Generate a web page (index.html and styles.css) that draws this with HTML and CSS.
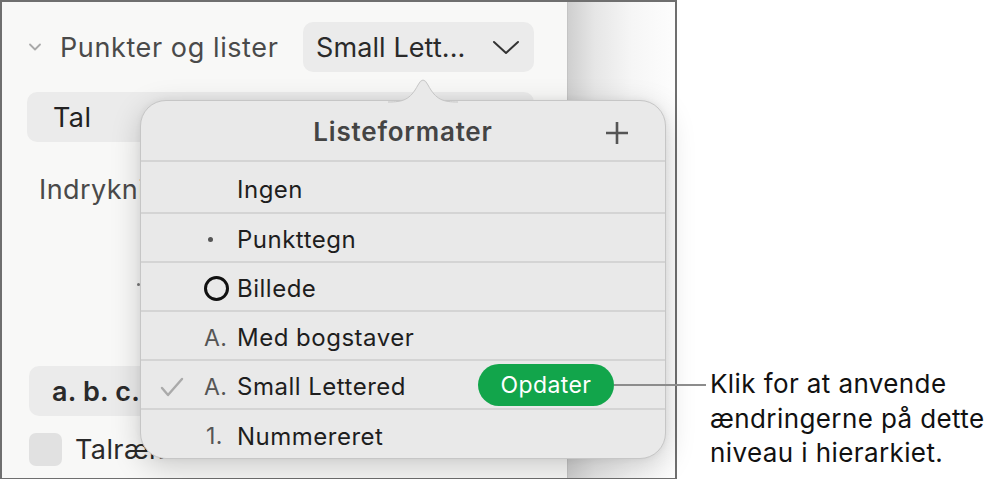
FILE: index.html
```html
<!DOCTYPE html>
<html lang="da">
<head>
  <meta charset="UTF-8" />
  <title>Listeformater</title>
  <link rel="stylesheet" href="styles.css">
</head>
<body>
  <div class="stage">
    <div class="window">
      <aside class="inspector">
        <div class="section-head">
          <svg class="disclosure" width="14" height="10" viewBox="0 0 14 10"><path d="M2 2.5 L7 7.5 L12 2.5" /></svg>
          <span class="section-title">Punkter og lister</span>
          <div class="popup">
            <span>Small Lett...</span>
            <svg class="popup-chevron" width="28" height="16" viewBox="0 0 28 16"><path d="M2 3 L14 14 L26 3" /></svg>
          </div>
        </div>
        <div class="select-wide">Tal</div>
        <div class="field-label">Indrykning</div>
        <div class="gap-area"><span class="tick"></span></div>
        <div class="select-short">a. b. c.</div>
        <div class="check-row">
          <span class="checkbox"></span>
          <span>Talrække:</span>
        </div>
      </aside>
      <div class="canvas"></div>

      <!-- Listeformater popover -->
      <div class="popover">
        <svg class="popover-arrow" width="70" height="26" viewBox="0 0 70 26">
          <path class="arrow-fill" d="M0 26 C15 26 22 24 30 9 Q35 -1 40 9 C48 24 55 26 70 26 Z" />
          <path class="arrow-edge" d="M0 26 C15 26 22 24 30 9 Q35 -1 40 9 C48 24 55 26 70 26" />
        </svg>
        <div class="popover-head">
          <span class="popover-title">Listeformater</span>
          <svg class="add-icon" width="26" height="26" viewBox="0 0 26 26"><path d="M13 2 V24 M2 13 H24" /></svg>
        </div>
        <div class="style-row first">
          <span class="check"></span><span class="marker"></span>
          <span class="style-name">Ingen</span>
        </div>
        <div class="style-row">
          <span class="check"></span><span class="marker"><span class="bullet"></span></span>
          <span class="style-name">Punkttegn</span>
        </div>
        <div class="style-row">
          <span class="check"></span><span class="marker"><span class="ring"></span></span>
          <span class="style-name">Billede</span>
        </div>
        <div class="style-row">
          <span class="check"></span><span class="marker">A.</span>
          <span class="style-name">Med bogstaver</span>
        </div>
        <div class="style-row">
          <span class="check">
            <svg width="24" height="20" viewBox="0 0 24 20"><path d="M2 11 L8 18 L22 2" /></svg>
          </span>
          <span class="marker">A.</span>
          <span class="style-name">Small Lettered</span>
          <span class="update-btn">Opdater</span>
        </div>
        <div class="style-row last">
          <span class="check"></span><span class="marker num">1.</span>
          <span class="style-name">Nummereret</span>
        </div>
      </div>
    </div>

    <p class="callout">Klik for at anvende<br>ændringerne på dette<br>niveau i hierarkiet.</p>
  </div>
</body>
</html>
```

FILE: styles.css
```css
:root {
  --frame-color: #6f6f6f;
  --sidebar-bg: #f8f8f7;
  --control-bg: #ebebeb;
  --popover-bg: #e9e9e9;
  --rule-color: #d4d4d4;
  --text-color: #1e1e1e;
  --muted-text: #4a4a4a;
  --accent-green: #12a54b;
  --font-family: 'Inter', 'Roboto', sans-serif;
}

* {
  box-sizing: border-box;
  margin: 0;
  padding: 0;
}

html, body {
  width: 100%;
  height: 100%;
  background: #ffffff;
  font-family: var(--font-family);
  color: var(--text-color);
  overflow: hidden;
}

.stage {
  display: flex;
  align-items: flex-start;
}

/* Window frame with the inspector sidebar */
.window {
  position: relative;
  display: flex;
  width: 677px;
  height: 479px;
  border: 2px solid var(--frame-color);
  border-bottom-width: 1px;
  flex-shrink: 0;
}

.inspector {
  width: 566px;
  background: var(--sidebar-bg);
  border-right: 1px solid #c4c4c4;
  padding: 20px 33px 0 23px;
  display: flex;
  flex-direction: column;
  font-size: 27px;
  letter-spacing: 0.4px;
}

.canvas {
  flex: 1;
  background: linear-gradient(to right, #cfcfcf 0%, #e6e6e6 25%, #f6f6f6 60%, #fdfdfd 100%);
}

.section-head {
  display: flex;
  align-items: center;
  height: 50px;
}

.disclosure {
  margin: 0 18px 0 3px;
}

.disclosure path {
  fill: none;
  stroke: #a9a9a9;
  stroke-width: 1.8;
  stroke-linecap: round;
  stroke-linejoin: round;
}

.section-title {
  color: var(--muted-text);
  letter-spacing: 0.6px;
}

.popup {
  margin-left: auto;
  width: 231px;
  height: 50px;
  background: var(--control-bg);
  border-radius: 10px;
  display: flex;
  align-items: center;
  padding: 0 14px 0 13px;
  color: #2a2a2a;
  letter-spacing: 0.1px;
}

.popup-chevron {
  margin-left: auto;
}

.popup-chevron path {
  fill: none;
  stroke: #333;
  stroke-width: 2;
  stroke-linecap: round;
  stroke-linejoin: round;
}

.select-wide {
  margin: 20px 0 0 2px;
  height: 50px;
  background: var(--control-bg);
  border-radius: 10px;
  display: flex;
  align-items: center;
  padding-left: 26px;
  color: #222;
}

.field-label {
  margin: 33px 0 0 14px;
  height: 30px;
  line-height: 30px;
  color: var(--muted-text);
}

.gap-area {
  position: relative;
  height: 161px;
}

.tick {
  position: absolute;
  left: 112px;
  top: 78px;
  width: 3px;
  height: 3px;
  border-radius: 50%;
  background: #777;
}

.select-short {
  margin-left: 4px;
  width: 220px;
  height: 50px;
  background: var(--control-bg);
  border-radius: 10px;
  display: flex;
  align-items: center;
  padding-left: 23px;
  font-weight: 600;
  letter-spacing: 0.2px;
  color: #2a2a2a;
}

.check-row {
  display: flex;
  align-items: center;
  gap: 13px;
  margin: 17px 0 0 4px;
  color: #2a2a2a;
}

.checkbox {
  width: 33px;
  height: 33px;
  border-radius: 7px;
  background: #e1e1e1;
}

/* Popover */
.popover {
  position: absolute;
  left: 138px;
  top: 98px;
  width: 526px;
  height: 359px;
  background: var(--popover-bg);
  border: 1px solid #c6c6c6;
  border-radius: 26px;
  box-shadow: 0 8px 30px rgba(0, 0, 0, 0.18), 0 0 6px rgba(0, 0, 0, 0.06);
  display: flex;
  flex-direction: column;
}

.popover-arrow {
  position: absolute;
  left: 247px;
  top: -25px;
  overflow: visible;
}

.arrow-fill {
  fill: var(--popover-bg);
}

.arrow-edge {
  fill: none;
  stroke: #c6c6c6;
  stroke-width: 1;
}

.popover-head {
  position: relative;
  height: 61px;
  display: flex;
  align-items: center;
  justify-content: center;
  border-bottom: 2px solid var(--rule-color);
}

.popover-title {
  font-size: 26px;
  font-weight: 600;
  letter-spacing: 0.8px;
  color: #444;
  margin-top: 2px;
}

.add-icon {
  position: absolute;
  right: 35px;
  top: 19px;
}

.add-icon path {
  fill: none;
  stroke: #555;
  stroke-width: 2.6;
}

.style-row {
  display: flex;
  align-items: center;
  height: 49px;
  border-bottom: 2px solid var(--rule-color);
  padding: 4px 51px 0 19px;
  font-size: 24px;
  letter-spacing: 0.5px;
}

.style-row.first {
  height: 52px;
}

.style-row.last {
  flex: 1;
  border-bottom: none;
}

.check {
  width: 44px;
  display: flex;
  align-items: center;
}

.check path {
  fill: none;
  stroke: #aaaaaa;
  stroke-width: 2.4;
  stroke-linecap: round;
  stroke-linejoin: round;
}

.marker {
  width: 33px;
  color: #555;
  font-size: 23px;
  letter-spacing: 0.3px;
  display: flex;
  align-items: center;
}

.marker.num {
  padding-left: 2px;
}

.bullet {
  width: 5px;
  height: 5px;
  border-radius: 50%;
  background: #555;
  margin-left: 4px;
}

.ring {
  width: 25px;
  height: 25px;
  border-radius: 50%;
  border: 3.5px solid #111;
}

.style-name {
  color: var(--text-color);
}

.update-btn {
  position: relative;
  margin-left: auto;
  width: 136px;
  height: 42px;
  margin-top: -4px;
  border-radius: 21px;
  background: var(--accent-green);
  color: #ffffff;
  font-size: 23px;
  letter-spacing: 0.4px;
  display: flex;
  align-items: center;
  justify-content: center;
}

/* Leader line out to the callout text */
.update-btn::after {
  content: '';
  position: absolute;
  left: 100%;
  top: 20px;
  width: 92px;
  height: 2px;
  background: #8c8c8c;
}

.callout {
  margin: 367px 0 0 33px;
  font-size: 26px;
  line-height: 34.5px;
  letter-spacing: 0.4px;
  color: #111;
}
```
